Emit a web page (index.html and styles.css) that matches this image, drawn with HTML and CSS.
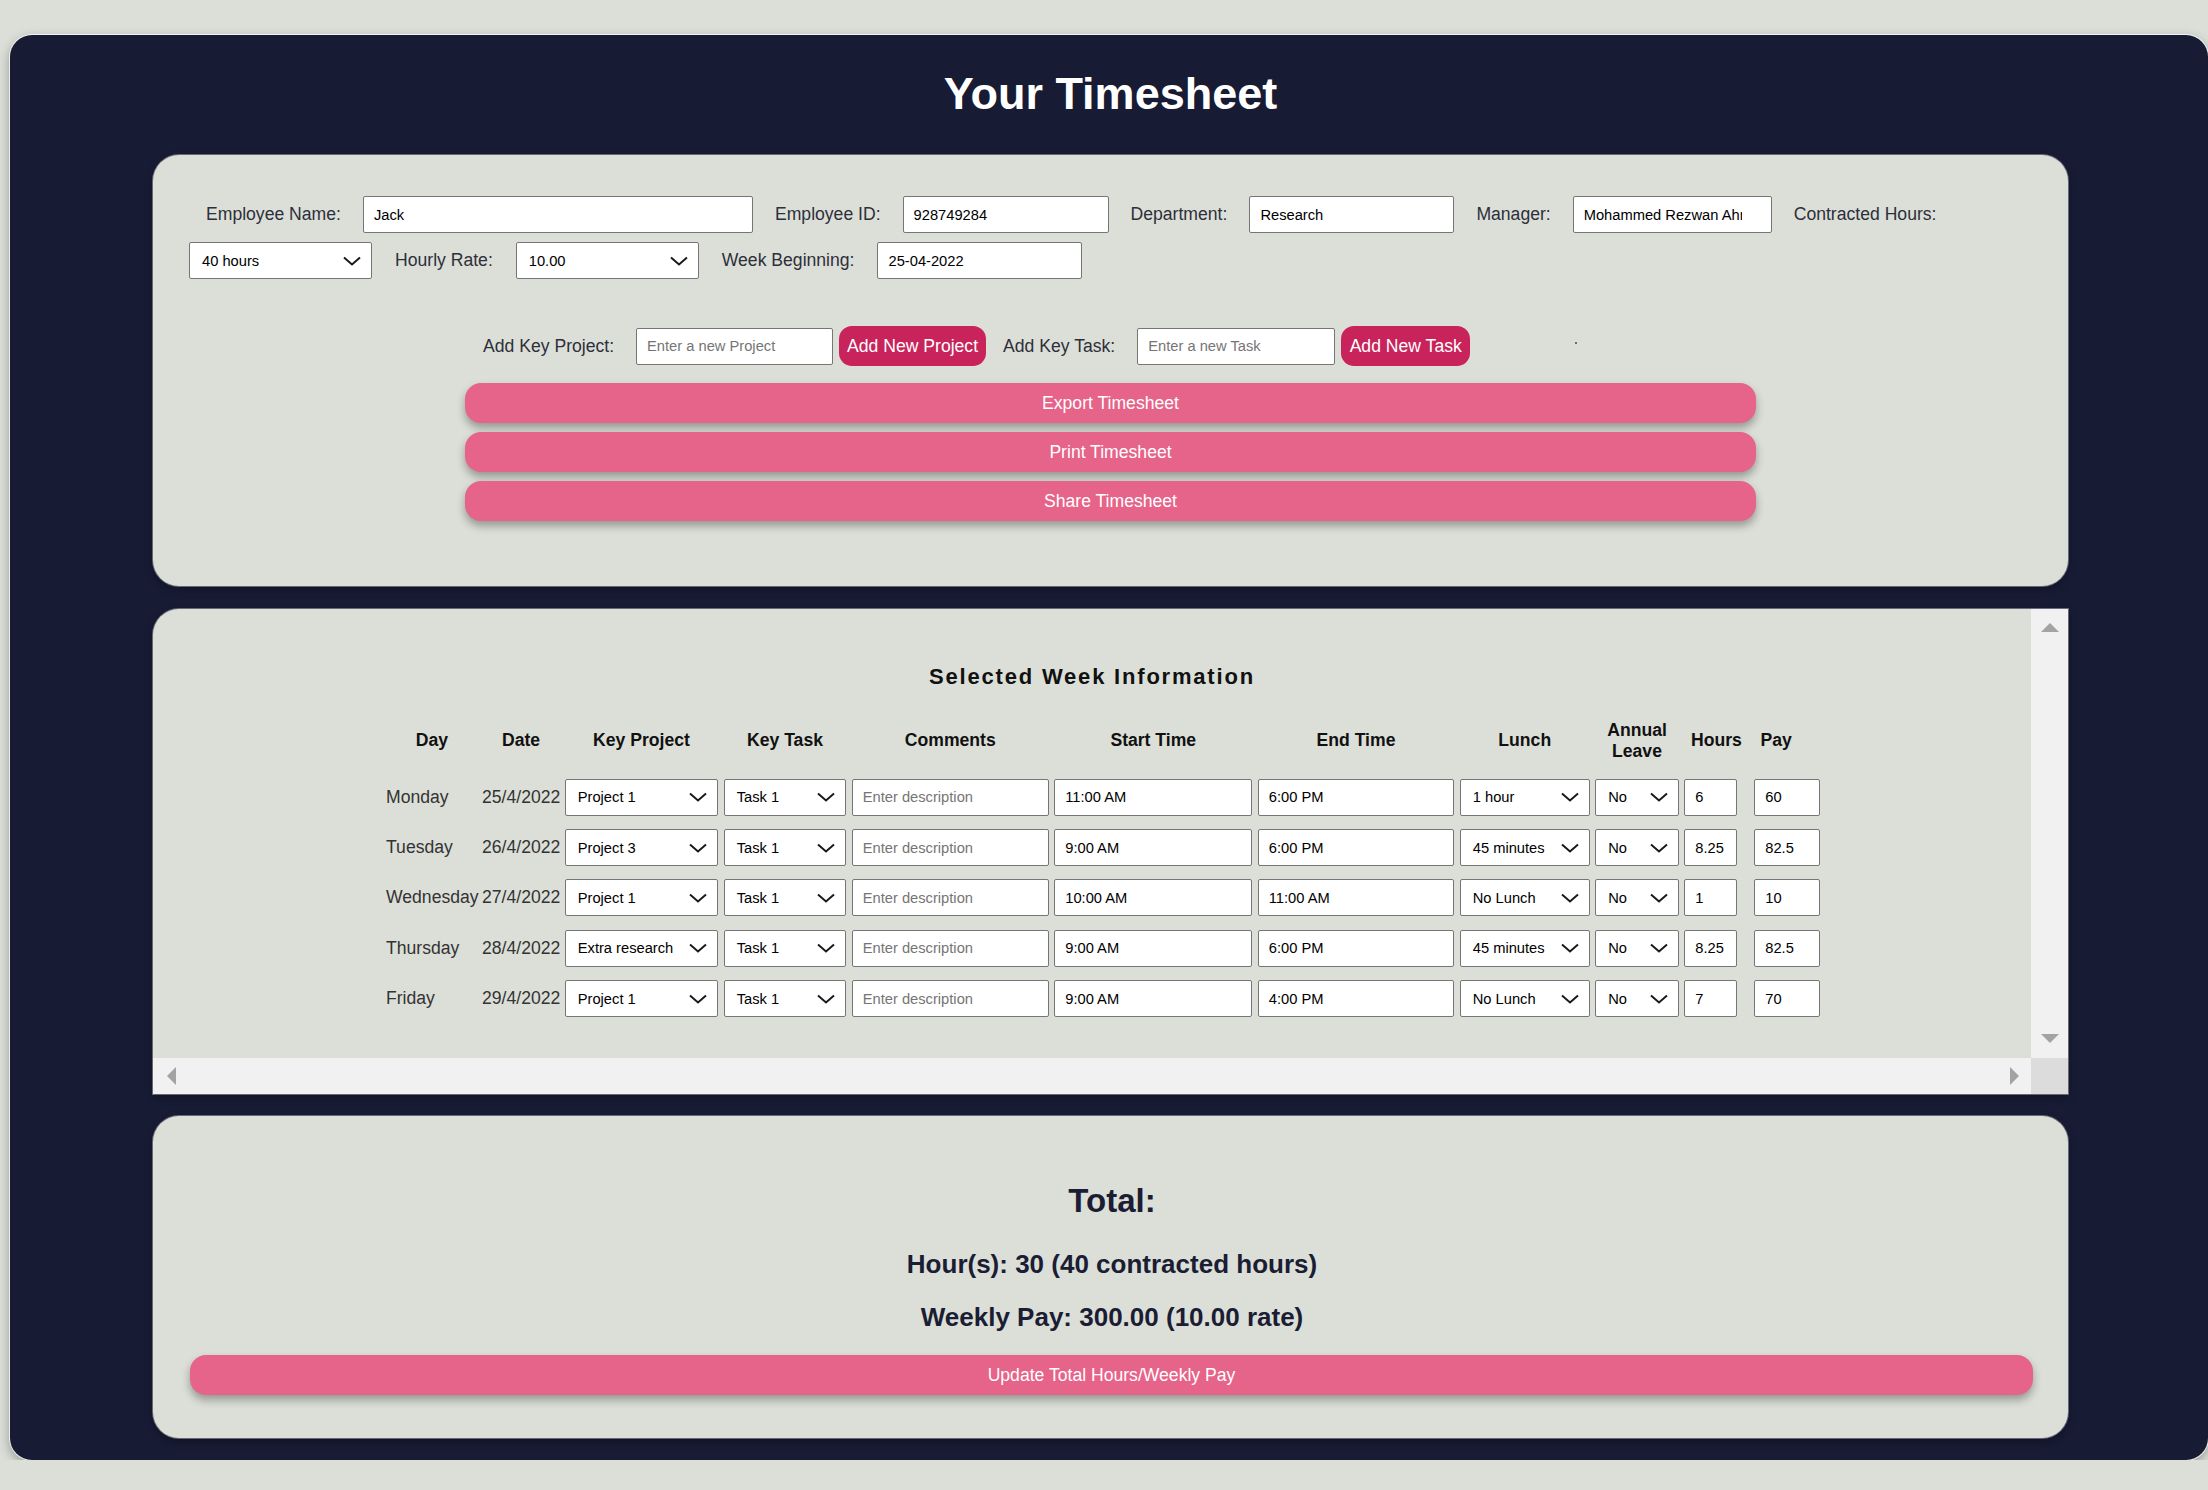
FILE: index.html
```html
<!DOCTYPE html>
<html lang="en">
<head>
<meta charset="utf-8">
<title>Your Timesheet</title>
<link rel="stylesheet" href="styles.css">
</head>
<body>
<div class="app">
  <h1 class="title">Your Timesheet</h1>

  <section class="panel panel-info">
    <div class="form-row row-1">
      <label class="lbl">Employee Name:</label>
      <input class="field w-name" type="text" value="Jack">
      <label class="lbl">Employee ID:</label>
      <input class="field w-id" type="text" value="928749284">
      <label class="lbl">Department:</label>
      <input class="field w-dept" type="text" value="Research">
      <label class="lbl">Manager:</label>
      <input class="field w-mgr" type="text" value="Mohammed Rezwan Ahmed">
      <label class="lbl">Contracted Hours:</label>
    </div>
    <div class="form-row row-2">
      <div class="select w-sel"><span>40 hours</span><svg class="chev" viewBox="0 0 18 10" width="18" height="10"><path d="M1 1.5 L9 8.5 L17 1.5"/></svg></div>
      <label class="lbl">Hourly Rate:</label>
      <div class="select w-sel"><span>10.00</span><svg class="chev" viewBox="0 0 18 10" width="18" height="10"><path d="M1 1.5 L9 8.5 L17 1.5"/></svg></div>
      <label class="lbl">Week Beginning:</label>
      <input class="field w-week" type="text" value="25-04-2022">
    </div>
    <div class="form-row row-3">
      <label class="lbl">Add Key Project:</label>
      <input class="field w-add" type="text" placeholder="Enter a new Project">
      <button class="btn-add btn-proj">Add New Project</button>
      <label class="lbl lbl-task">Add Key Task:</label>
      <input class="field w-add2" type="text" placeholder="Enter a new Task">
      <button class="btn-add btn-task">Add New Task</button>
      <span class="dot"></span>
    </div>
    <div class="actions">
      <button class="btn-wide">Export Timesheet</button>
      <button class="btn-wide">Print Timesheet</button>
      <button class="btn-wide">Share Timesheet</button>
    </div>
  </section>

  <section class="panel panel-week">
    <div class="week-content">
      <h2 class="week-title">Selected Week Information</h2>
      <div class="wk-row wk-head">
        <div>Day</div><div>Date</div><div>Key Project</div><div>Key Task</div><div>Comments</div>
        <div>Start Time</div><div>End Time</div><div>Lunch</div><div>Annual<br>Leave</div><div>Hours</div><div class="h-pay">Pay</div>
      </div>

      <div class="wk-row">
        <div class="txt">Monday</div><div class="txt">25/4/2022</div>
        <div class="cell"><div class="select"><span>Project 1</span><svg class="chev" viewBox="0 0 18 10" width="18" height="10"><path d="M1 1.5 L9 8.5 L17 1.5"/></svg></div></div>
        <div class="cell"><div class="select"><span>Task 1</span><svg class="chev" viewBox="0 0 18 10" width="18" height="10"><path d="M1 1.5 L9 8.5 L17 1.5"/></svg></div></div>
        <div class="cell"><input class="field" type="text" placeholder="Enter description"></div>
        <div class="cell"><input class="field" type="text" value="11:00 AM"></div>
        <div class="cell"><input class="field" type="text" value="6:00 PM"></div>
        <div class="cell"><div class="select"><span>1 hour</span><svg class="chev" viewBox="0 0 18 10" width="18" height="10"><path d="M1 1.5 L9 8.5 L17 1.5"/></svg></div></div>
        <div class="cell"><div class="select"><span>No</span><svg class="chev" viewBox="0 0 18 10" width="18" height="10"><path d="M1 1.5 L9 8.5 L17 1.5"/></svg></div></div>
        <div class="cell"><input class="field f-hours" type="text" value="6"></div>
        <div class="cell"><input class="field f-pay" type="text" value="60"></div>
      </div>

      <div class="wk-row">
        <div class="txt">Tuesday</div><div class="txt">26/4/2022</div>
        <div class="cell"><div class="select"><span>Project 3</span><svg class="chev" viewBox="0 0 18 10" width="18" height="10"><path d="M1 1.5 L9 8.5 L17 1.5"/></svg></div></div>
        <div class="cell"><div class="select"><span>Task 1</span><svg class="chev" viewBox="0 0 18 10" width="18" height="10"><path d="M1 1.5 L9 8.5 L17 1.5"/></svg></div></div>
        <div class="cell"><input class="field" type="text" placeholder="Enter description"></div>
        <div class="cell"><input class="field" type="text" value="9:00 AM"></div>
        <div class="cell"><input class="field" type="text" value="6:00 PM"></div>
        <div class="cell"><div class="select"><span>45 minutes</span><svg class="chev" viewBox="0 0 18 10" width="18" height="10"><path d="M1 1.5 L9 8.5 L17 1.5"/></svg></div></div>
        <div class="cell"><div class="select"><span>No</span><svg class="chev" viewBox="0 0 18 10" width="18" height="10"><path d="M1 1.5 L9 8.5 L17 1.5"/></svg></div></div>
        <div class="cell"><input class="field f-hours" type="text" value="8.25"></div>
        <div class="cell"><input class="field f-pay" type="text" value="82.5"></div>
      </div>

      <div class="wk-row">
        <div class="txt">Wednesday</div><div class="txt">27/4/2022</div>
        <div class="cell"><div class="select"><span>Project 1</span><svg class="chev" viewBox="0 0 18 10" width="18" height="10"><path d="M1 1.5 L9 8.5 L17 1.5"/></svg></div></div>
        <div class="cell"><div class="select"><span>Task 1</span><svg class="chev" viewBox="0 0 18 10" width="18" height="10"><path d="M1 1.5 L9 8.5 L17 1.5"/></svg></div></div>
        <div class="cell"><input class="field" type="text" placeholder="Enter description"></div>
        <div class="cell"><input class="field" type="text" value="10:00 AM"></div>
        <div class="cell"><input class="field" type="text" value="11:00 AM"></div>
        <div class="cell"><div class="select"><span>No Lunch</span><svg class="chev" viewBox="0 0 18 10" width="18" height="10"><path d="M1 1.5 L9 8.5 L17 1.5"/></svg></div></div>
        <div class="cell"><div class="select"><span>No</span><svg class="chev" viewBox="0 0 18 10" width="18" height="10"><path d="M1 1.5 L9 8.5 L17 1.5"/></svg></div></div>
        <div class="cell"><input class="field f-hours" type="text" value="1"></div>
        <div class="cell"><input class="field f-pay" type="text" value="10"></div>
      </div>

      <div class="wk-row">
        <div class="txt">Thursday</div><div class="txt">28/4/2022</div>
        <div class="cell"><div class="select"><span>Extra research</span><svg class="chev" viewBox="0 0 18 10" width="18" height="10"><path d="M1 1.5 L9 8.5 L17 1.5"/></svg></div></div>
        <div class="cell"><div class="select"><span>Task 1</span><svg class="chev" viewBox="0 0 18 10" width="18" height="10"><path d="M1 1.5 L9 8.5 L17 1.5"/></svg></div></div>
        <div class="cell"><input class="field" type="text" placeholder="Enter description"></div>
        <div class="cell"><input class="field" type="text" value="9:00 AM"></div>
        <div class="cell"><input class="field" type="text" value="6:00 PM"></div>
        <div class="cell"><div class="select"><span>45 minutes</span><svg class="chev" viewBox="0 0 18 10" width="18" height="10"><path d="M1 1.5 L9 8.5 L17 1.5"/></svg></div></div>
        <div class="cell"><div class="select"><span>No</span><svg class="chev" viewBox="0 0 18 10" width="18" height="10"><path d="M1 1.5 L9 8.5 L17 1.5"/></svg></div></div>
        <div class="cell"><input class="field f-hours" type="text" value="8.25"></div>
        <div class="cell"><input class="field f-pay" type="text" value="82.5"></div>
      </div>

      <div class="wk-row">
        <div class="txt">Friday</div><div class="txt">29/4/2022</div>
        <div class="cell"><div class="select"><span>Project 1</span><svg class="chev" viewBox="0 0 18 10" width="18" height="10"><path d="M1 1.5 L9 8.5 L17 1.5"/></svg></div></div>
        <div class="cell"><div class="select"><span>Task 1</span><svg class="chev" viewBox="0 0 18 10" width="18" height="10"><path d="M1 1.5 L9 8.5 L17 1.5"/></svg></div></div>
        <div class="cell"><input class="field" type="text" placeholder="Enter description"></div>
        <div class="cell"><input class="field" type="text" value="9:00 AM"></div>
        <div class="cell"><input class="field" type="text" value="4:00 PM"></div>
        <div class="cell"><div class="select"><span>No Lunch</span><svg class="chev" viewBox="0 0 18 10" width="18" height="10"><path d="M1 1.5 L9 8.5 L17 1.5"/></svg></div></div>
        <div class="cell"><div class="select"><span>No</span><svg class="chev" viewBox="0 0 18 10" width="18" height="10"><path d="M1 1.5 L9 8.5 L17 1.5"/></svg></div></div>
        <div class="cell"><input class="field f-hours" type="text" value="7"></div>
        <div class="cell"><input class="field f-pay" type="text" value="70"></div>
      </div>
    </div>
    <div class="vbar">
      <svg class="arrow" viewBox="0 0 18 9" width="18" height="9"><path d="M9 0 L18 9 L0 9 Z"/></svg>
      <svg class="arrow" viewBox="0 0 18 9" width="18" height="9"><path d="M0 0 L18 0 L9 9 Z"/></svg>
    </div>
    <div class="hbar">
      <svg class="arrow" viewBox="0 0 9 18" width="9" height="18"><path d="M9 0 L9 18 L0 9 Z"/></svg>
      <svg class="arrow" viewBox="0 0 9 18" width="9" height="18"><path d="M0 0 L9 9 L0 18 Z"/></svg>
    </div>
    <div class="corner"></div>
  </section>

  <section class="panel panel-total">
    <h2 class="total-title">Total:</h2>
    <p class="total-line line-hours">Hour(s): 30 (40 contracted hours)</p>
    <p class="total-line line-pay">Weekly Pay: 300.00 (10.00 rate)</p>
    <button class="btn-wide btn-update">Update Total Hours/Weekly Pay</button>
  </section>
</div>
</body>
</html>
```

FILE: styles.css
```css
html, body {
  margin: 0;
  padding: 0;
}

body {
  background: #dcdfd8;
  font-family: "Liberation Sans", Arial, sans-serif;
  color: #2d2f3a;
}

.app {
  box-sizing: border-box;
  width: 2198px;
  margin: 35px 0 0 10px;
  padding: 33px 140px 22px 143px;
  background: #171b34;
  border-radius: 22px;
  box-shadow: 0 0 0 1px rgba(255, 255, 255, 0.75), 0 4px 12px rgba(0, 0, 0, 0.35);
}

.title {
  margin: 0 0 35px 0;
  font-size: 45px;
  line-height: 52px;
  font-weight: bold;
  color: #ffffff;
  text-align: center;
}

.panel {
  box-sizing: border-box;
  background: #dcdfd8;
  border-radius: 26px;
  box-shadow: 0 0 0 1px rgba(255, 255, 255, 0.35), 0 3px 8px rgba(0, 0, 0, 0.3);
}

/* ---------- info panel ---------- */
.panel-info {
  padding: 41px 0 65px 0;
  margin-bottom: 23px;
}

.form-row {
  display: flex;
  align-items: center;
}

.row-1 {
  height: 37px;
  padding-left: 53px;
  gap: 22px;
}

.row-2 {
  height: 37px;
  margin-top: 9px;
  padding-left: 36px;
  gap: 23px;
}

.row-3 {
  height: 40px;
  margin-top: 47px;
  padding-left: 330px;
}

.lbl {
  font-size: 17.6px;
  color: #2d2f3a;
  white-space: nowrap;
}

.field {
  box-sizing: border-box;
  height: 37px;
  margin: 0;
  padding: 0 10px;
  border: 1px solid #767676;
  border-radius: 2px;
  background: #ffffff;
  font-family: "Liberation Sans", Arial, sans-serif;
  font-size: 14.7px;
  color: #000000;
  outline: none;
}

.field::placeholder {
  color: #757575;
}

.w-name { width: 390px; }
.w-id { width: 206px; }
.w-dept { width: 205px; }
.w-mgr { width: 199px; padding-right: 29px; }
.w-sel { width: 183px; }
.w-week { width: 205px; }
.w-add { width: 197px; margin-left: 22px; }
.w-add2 { width: 198px; margin-left: 22px; }

.select {
  box-sizing: border-box;
  display: flex;
  align-items: center;
  justify-content: space-between;
  height: 37px;
  padding: 0 10px 0 12px;
  border: 1px solid #767676;
  border-radius: 2px;
  background: #ffffff;
  font-size: 14.7px;
  color: #000000;
  white-space: nowrap;
  overflow: hidden;
}

.chev {
  flex: none;
  fill: none;
  stroke: #1a1a1a;
  stroke-width: 2;
}

.btn-add {
  height: 40px;
  margin: 0;
  border: none;
  border-radius: 13px;
  background: #c8235a;
  color: #ffffff;
  font-family: "Liberation Sans", Arial, sans-serif;
  font-size: 17.6px;
  padding: 0;
}

.btn-proj { width: 147px; margin-left: 6px; }
.btn-task { width: 129px; margin-left: 6px; }
.lbl-task { margin-left: 17px; }

.dot {
  width: 2px;
  height: 2px;
  margin-left: 105px;
  margin-top: -6px;
  background: #6a6a6a;
}

.actions {
  display: flex;
  flex-direction: column;
  align-items: center;
  gap: 9px;
  margin-top: 17px;
}

.btn-wide {
  display: block;
  width: 1291px;
  height: 40px;
  margin: 0;
  border: none;
  border-radius: 16px;
  background: #e66389;
  color: #ffffff;
  font-family: "Liberation Sans", Arial, sans-serif;
  font-size: 17.6px;
  box-shadow: 0 5px 8px rgba(0, 0, 0, 0.32);
}

/* ---------- week panel ---------- */
.panel-week {
  display: grid;
  grid-template-columns: 1878px 37px;
  grid-template-rows: 449px 36px;
  border-radius: 26px 0 0 0;
  overflow: hidden;
  margin-bottom: 22px;
}

.week-content {
  padding-top: 55.2px;
}

.week-title {
  margin: 0 0 28.4px 0;
  font-size: 22px;
  line-height: 26px;
  font-weight: bold;
  letter-spacing: 1.8px;
  text-align: center;
  color: #111111;
}

.wk-row {
  display: grid;
  grid-template-columns: 96px 82px 159px 128px 202.5px 203.5px 202px 135.5px 89px 70px 70.5px;
  align-items: center;
  height: 50.3px;
  margin-left: 231px;
}

.wk-head {
  height: 44px;
  margin-bottom: 9.6px;
  text-align: center;
  font-size: 17.6px;
  line-height: 21px;
  font-weight: bold;
  color: #111111;
}

.h-pay {
  padding-right: 21px;
}

.txt {
  padding-left: 2px;
  font-size: 17.6px;
  color: #333333;
  white-space: nowrap;
}

.cell {
  padding-left: 2.75px;
}

.cell .field,
.cell .select {
  width: calc(100% - 2.75px);
}

.cell .f-hours { width: 53px; }
.cell .f-pay { width: 66px; }

.vbar {
  grid-column: 2;
  grid-row: 1;
  background: #f1f1f1;
  display: flex;
  flex-direction: column;
  align-items: center;
  justify-content: space-between;
  padding: 14px 0 15px 0;
}

.hbar {
  grid-column: 1;
  grid-row: 2;
  background: #f1f1f1;
  display: flex;
  align-items: center;
  justify-content: space-between;
  padding: 0 12px 0 14px;
}

.arrow {
  fill: #a3a3a3;
}

.corner {
  grid-column: 2;
  grid-row: 2;
  background: #dcdcdc;
}

/* ---------- total panel ---------- */
.panel-total {
  padding: 65.6px 34px 42.6px 37px;
  text-align: center;
  color: #1a1d33;
}

.total-title {
  margin: 0;
  font-size: 33px;
  line-height: 38px;
  font-weight: bold;
}

.total-line {
  margin: 0;
  font-size: 26px;
  line-height: 30px;
  font-weight: bold;
}

.line-hours { margin-top: 29.8px; }
.line-pay { margin-top: 23px; }

.btn-update {
  width: 1843px;
  margin-top: 23px;
}
```
